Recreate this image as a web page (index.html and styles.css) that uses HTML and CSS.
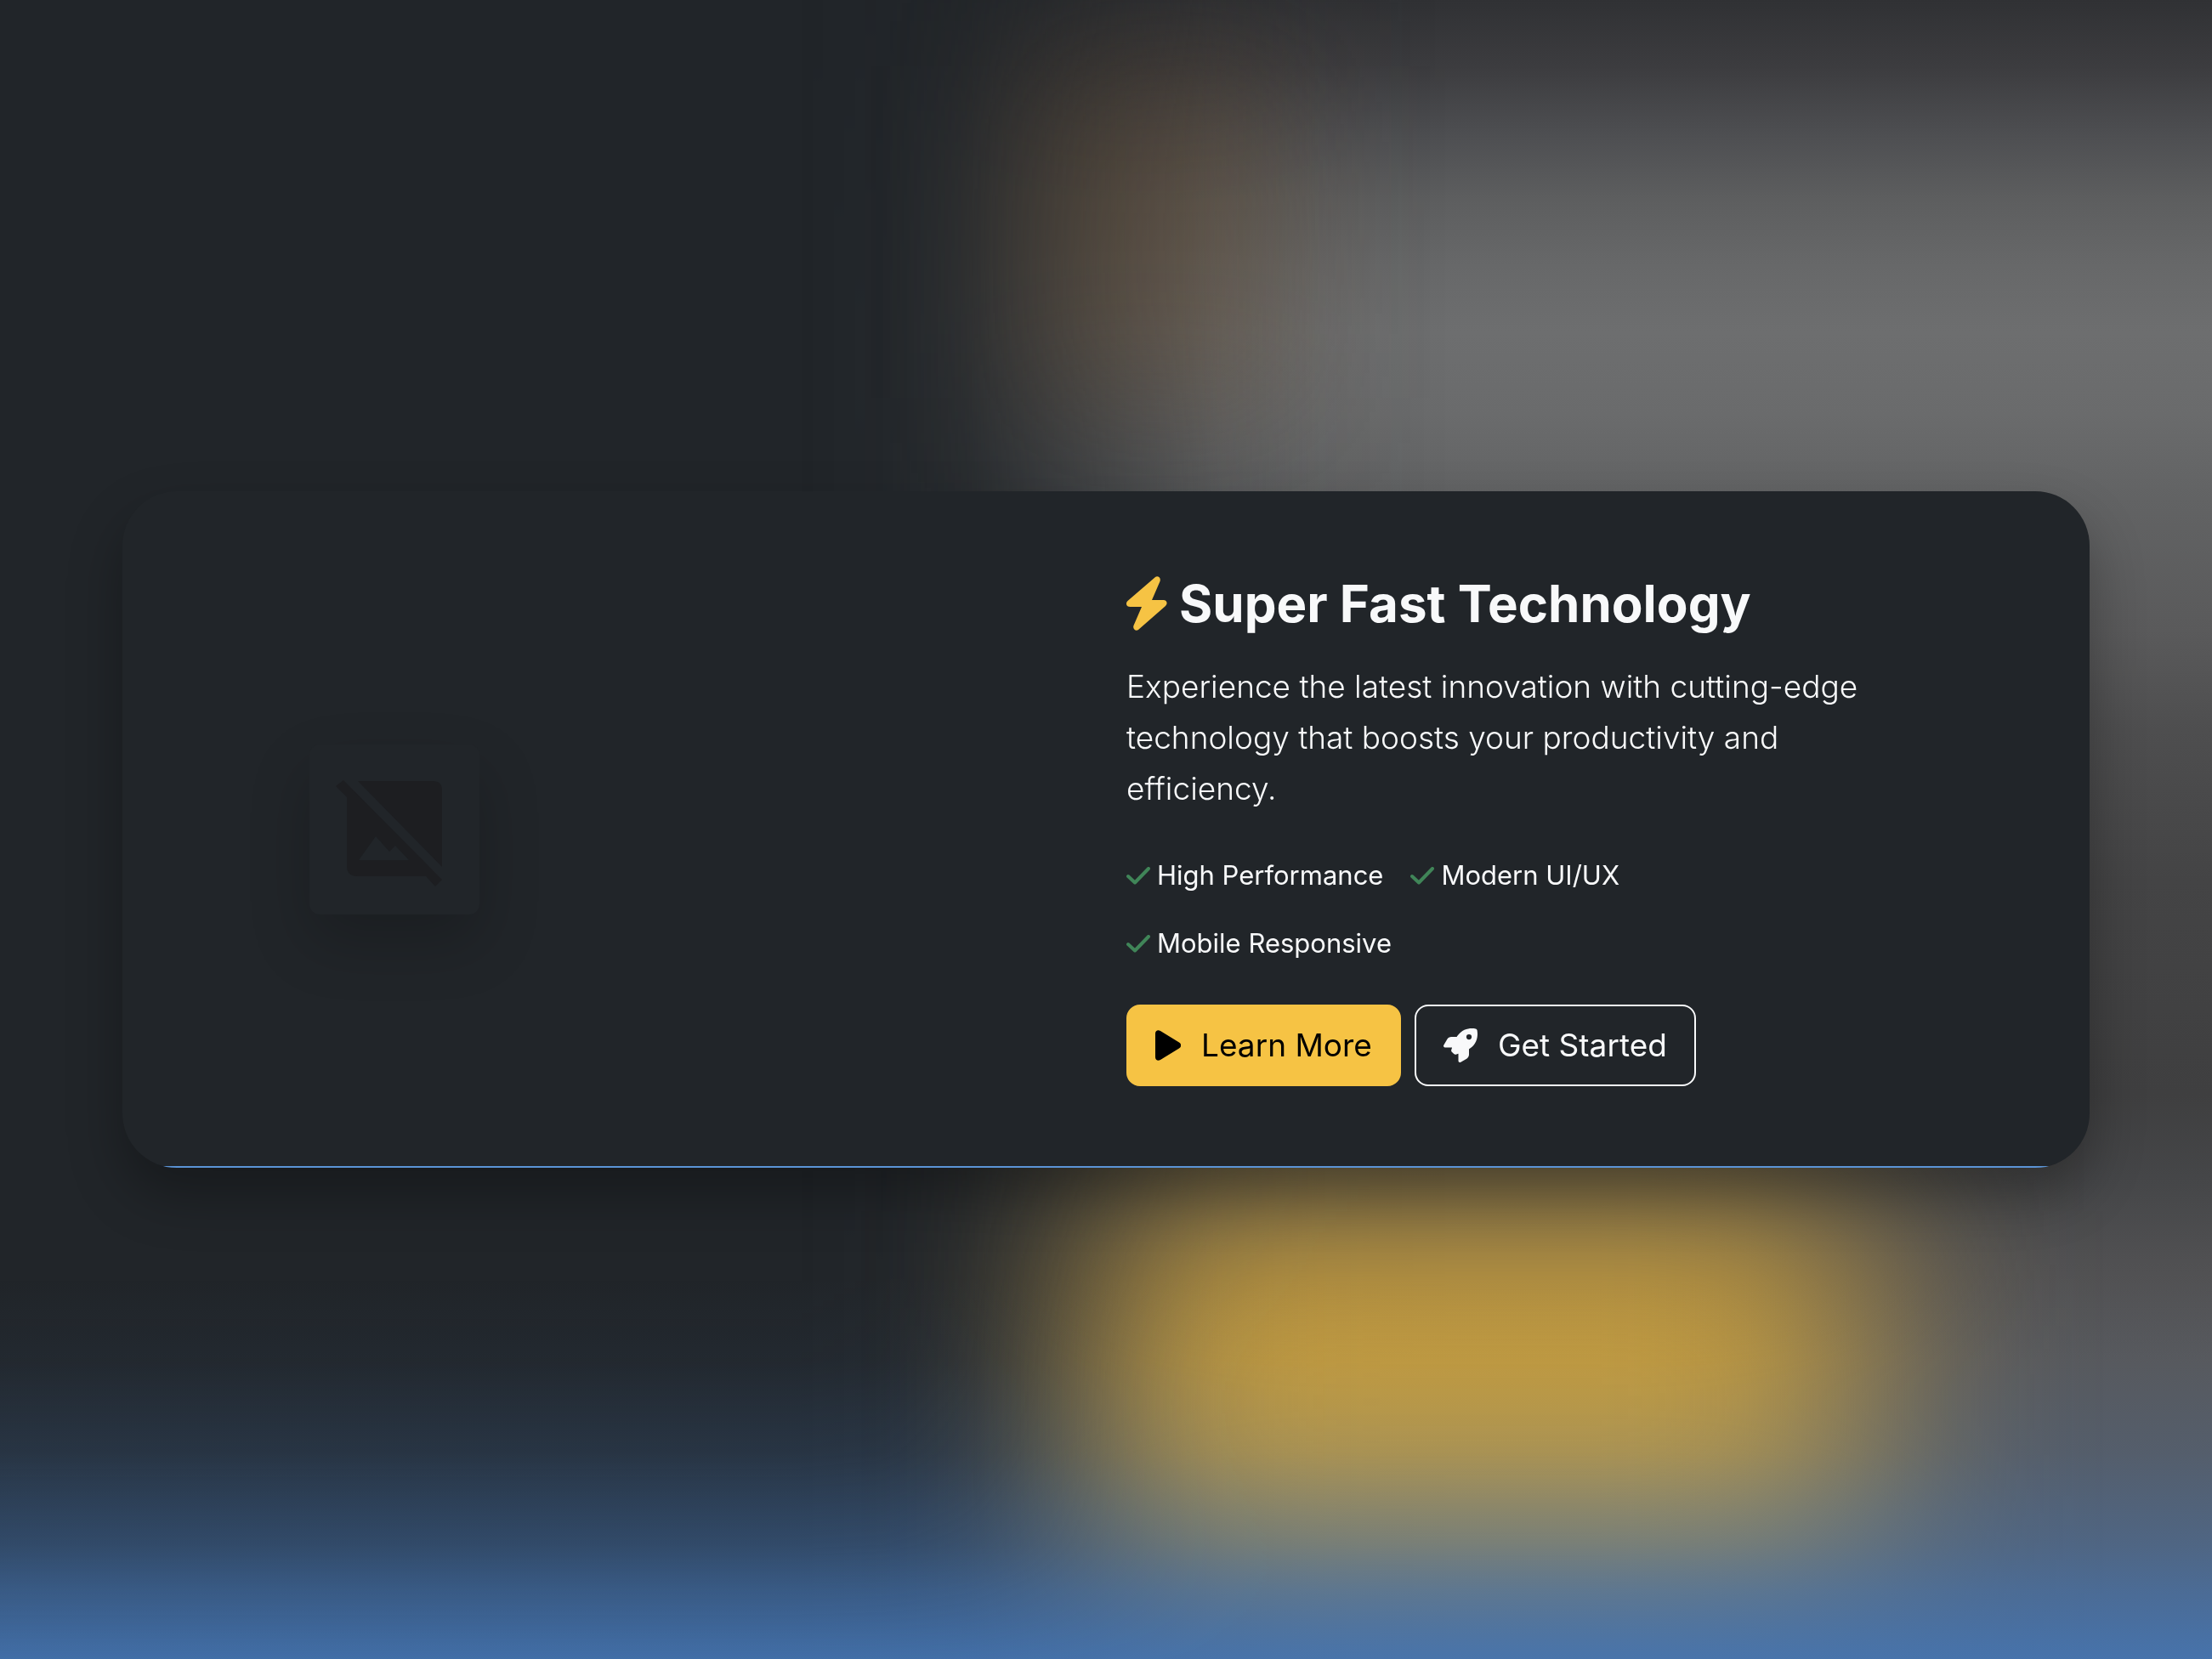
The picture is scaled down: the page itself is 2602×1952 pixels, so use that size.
FILE: index.html
```
<!DOCTYPE html>
<html lang="en">
<head>
<meta charset="utf-8">
<meta name="viewport" content="width=device-width, initial-scale=1">
<title>Super Fast Technology</title>
<link rel="stylesheet" href="styles.css">
</head>
<body>
<div class="backdrop" aria-hidden="true">
  <div class="glow glow-gray"></div>
  <div class="glow glow-brown"></div>
  <div class="glow glow-gold"></div>
  <div class="glow glow-blue"></div>
</div>
<main class="page">
  <section class="hero">
    <div class="hero-media">
      <div class="placeholder" role="img" aria-label="Image not available">
        <svg viewBox="0 0 200 200" aria-hidden="true">
          <path d="M57 43H145Q156 43 156 54V144Z"/>
          <path d="M31 49L40 42L156 159L148 167L137 155H56Q44 155 44 143V62ZM58 136H117L101 119L94 126L78 108Z" fill-rule="evenodd"/>
        </svg>
      </div>
    </div>
    <div class="hero-body">
      <h1 class="title">
        <svg class="icon-bolt" viewBox="0 0 48 64" aria-hidden="true"><path d="M34 1C37-1 41 2 39.500 6L30 28H43.500C47.500 28 49 32 46 35L14 63C11 65 7 62 8.500 58L18 36H4.500C0 36-1.500 32 1.500 29Z"/></svg>
        <span>Super Fast Technology</span>
      </h1>
      <p class="lead">Experience the latest innovation with cutting-edge technology that boosts your productivity and efficiency.</p>
      <ul class="features">
        <li><svg class="icon-check" viewBox="0 0 28 21" aria-hidden="true"><path d="M2 11L10 18.500L26 2"/></svg>High Performance</li>
        <li><svg class="icon-check" viewBox="0 0 28 21" aria-hidden="true"><path d="M2 11L10 18.500L26 2"/></svg>Modern UI/UX</li>
        <li><svg class="icon-check" viewBox="0 0 28 21" aria-hidden="true"><path d="M2 11L10 18.500L26 2"/></svg>Mobile Responsive</li>
      </ul>
      <div class="actions">
        <button class="btn btn-primary" type="button"><svg class="icon-play" viewBox="0 0 30 36" aria-hidden="true"><path d="M0 4C0 1 3-1 6 1L28 14.500C31 16.500 31 19.500 28 21.500L6 35C3 37 0 35 0 32Z"/></svg>Learn More</button>
        <button class="btn btn-outline" type="button"><svg class="icon-rocket" viewBox="0 0 512 512" aria-hidden="true"><path d="M156.600 384.900L125.700 354c-8.500-8.500-11.500-20.800-7.700-32.200c3-8.900 7-20.500 11.800-33.800L24 288c-8.600 0-16.600-4.600-20.900-12.100s-4.200-16.700 .2-24.100l52.500-88.500c13-21.900 36.500-35.300 61.900-35.300l82.300 0c2.400-4 4.800-7.700 7.200-11.300C289.100-4.100 411.100-8.100 483.900 5.300c11.600 2.100 20.600 11.200 22.800 22.800c13.400 72.900 9.300 194.800-111.400 276.700c-3.500 2.400-7.300 4.800-11.300 7.200v82.300c0 25.400-13.400 49-35.300 61.900l-88.500 52.500c-7.400 4.400-16.600 4.500-24.100 .2s-12.100-12.200-12.100-20.900V380.800c-14.100 4.900-26.400 8.900-35.700 11.900c-11.200 3.600-23.400 .5-31.800-7.800zM384 168a40 40 0 1 0 0-80 40 40 0 1 0 0 80z"/></svg>Get Started</button>
      </div>
    </div>
  </section>
</main>
</body>
</html>
```
FILE: styles.css
```
* { box-sizing: border-box; }

body {
  margin: 0;
  background: #212529;
  color: #f8f9fa;
  font-family: Inter, "Liberation Sans", sans-serif;
}

.backdrop {
  position: fixed;
  inset: 0;
  z-index: -1;
  overflow: hidden;
}

.glow { position: absolute; }

.glow-gray {
  inset: 0 0 0 36%;
  background: linear-gradient(#303134, #3c3c3f 4%, #4d4e51 8%, #5d5e5f 12%, #676869 16%, #6d6e6f 20%, #6a6b6c 25%, #626364 30%, #5a5a5b 38%, #4e4e4f 44%, #444445 53%, #3f3f40 66%, #454648 71%, #505052 76%, #58585a 82%);
  mask-image: linear-gradient(to right, transparent, rgba(0, 0, 0, .03) 6%, rgba(0, 0, 0, .13) 12%, rgba(0, 0, 0, .31) 17%, rgba(0, 0, 0, .6) 24%, rgba(0, 0, 0, .83) 30%, rgba(0, 0, 0, .95) 37%, #000 47%);
}

.glow-brown {
  left: 46%;
  top: 4%;
  width: 12%;
  height: 20%;
  background: rgba(120, 80, 35, .28);
  filter: blur(80px);
}

.glow-gold {
  left: 50%;
  top: 73%;
  width: 34%;
  height: 23%;
  background: #cb9f3a;
  filter: blur(120px);
}

.glow-blue {
  inset: 77% 0 0;
  background: linear-gradient(rgba(69, 117, 178, 0), rgba(69, 117, 178, .05) 22%, rgba(69, 117, 178, .2) 46%, rgba(69, 117, 178, .47) 70%, rgba(69, 117, 178, .67) 82%, rgba(69, 117, 178, .92));
}

.page {
  min-height: 100vh;
  display: grid;
  align-items: center;
  padding: 48px 144px;
}

.hero {
  display: grid;
  grid-template-columns: 1fr 1fr;
  align-items: center;
  padding: 96px;
  border-radius: 64px;
  background: linear-gradient(#5b94d6, #5b94d6) bottom / 100% 2px no-repeat #212529;
  box-shadow: 0 32px 64px rgba(0, 0, 0, .3);
}

.hero-media { padding-left: 124px; }

.placeholder {
  width: 200px;
  height: 200px;
  border-radius: 12px;
  background: #212529;
  box-shadow: 0 32px 72px rgba(0, 0, 0, .2);
}

.placeholder svg {
  display: block;
  fill: #1d1e21;
}

.hero-body { padding: 0 144px 0 24px; }

.title {
  display: flex;
  align-items: center;
  gap: 14px;
  margin: 0 0 32px;
  font-size: 60px;
  line-height: 72px;
  font-weight: 700;
}

.icon-bolt {
  width: 48px;
  height: 64px;
  fill: #f6c344;
}

.lead {
  margin: 0 0 48px;
  font-size: 37px;
  line-height: 60px;
  font-weight: 350;
}

.features {
  display: flex;
  flex-wrap: wrap;
  gap: 32px;
  margin: 0 0 48px;
  padding: 0;
  list-style: none;
  font-size: 31px;
  line-height: 48px;
}

.features li {
  display: flex;
  align-items: center;
  gap: 8px;
}

.icon-check {
  width: 28px;
  height: 21px;
  fill: none;
  stroke: #408558;
  stroke-width: 4;
  stroke-linecap: round;
  stroke-linejoin: round;
}

.actions {
  display: flex;
  gap: 16px;
}

.btn {
  display: flex;
  align-items: center;
  gap: 24px;
  height: 96px;
  padding: 0 32px;
  border: 2px solid;
  border-radius: 16px;
  font: 400 37px/60px Inter, "Liberation Sans", sans-serif;
}

.btn-primary {
  border-color: #f6c344;
  background: #f6c344;
  color: #000;
}

.btn-outline {
  border-color: #f8f9fa;
  background: transparent;
  color: #f8f9fa;
}

.btn svg { fill: currentColor; }

.icon-play {
  width: 30px;
  height: 36px;
}

.icon-rocket {
  width: 40px;
  height: 40px;
}
```
